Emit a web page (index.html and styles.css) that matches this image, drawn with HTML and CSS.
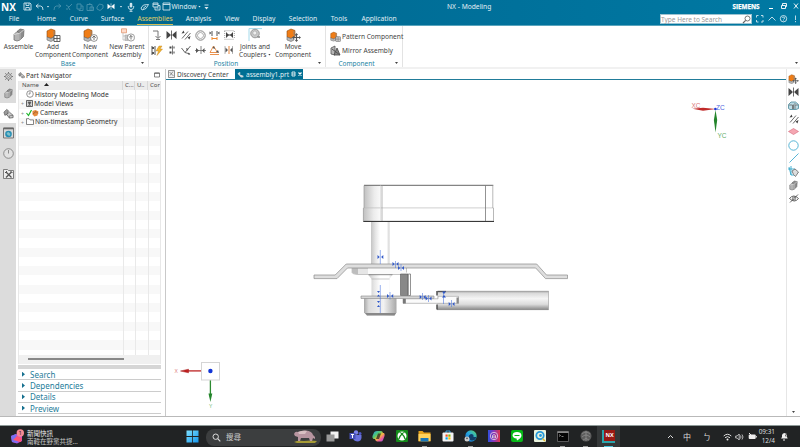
FILE: index.html
```html
<!DOCTYPE html>
<html lang="en">
<head>
<meta charset="utf-8">
<title>NX - Modeling</title>
<link rel="stylesheet" href="styles.css">
</head>
<body>
<svg class="defs" width="0" height="0">
  <defs>
    <linearGradient id="pin" x1="0" x2="1"><stop offset="0" stop-color="#c4c4c4"/><stop offset=".25" stop-color="#e6e6e6"/><stop offset=".5" stop-color="#fff"/><stop offset=".85" stop-color="#fff"/><stop offset="1" stop-color="#d0d0d0"/></linearGradient>
    <linearGradient id="knob" x1="0" x2="1"><stop offset="0" stop-color="#a8a8a8"/><stop offset=".15" stop-color="#dcdcdc"/><stop offset=".6" stop-color="#f2f2f2"/><stop offset="1" stop-color="#a8a8a8"/></linearGradient>
    <linearGradient id="box" x1="0" x2="1"><stop offset="0" stop-color="#c0c0c0"/><stop offset=".08" stop-color="#ececec"/><stop offset=".15" stop-color="#fff"/><stop offset="1" stop-color="#fff"/></linearGradient>
    <linearGradient id="rod" x1="0" x2="0" y1="0" y2="1"><stop offset="0" stop-color="#a4a4a4"/><stop offset=".12" stop-color="#dadada"/><stop offset=".4" stop-color="#f5f5f5"/><stop offset=".7" stop-color="#dcdcdc"/><stop offset="1" stop-color="#858585"/></linearGradient>
    <linearGradient id="win" x1="0" y1="0" x2="1" y2="1"><stop offset="0" stop-color="#7fe0ff"/><stop offset="1" stop-color="#1597ee"/></linearGradient>
    <linearGradient id="cop" x1="0" y1="0" x2="1" y2="1"><stop offset="0" stop-color="#2a9df4"/><stop offset=".35" stop-color="#52c96b"/><stop offset=".55" stop-color="#f5b63b"/><stop offset=".75" stop-color="#ee5aa0"/><stop offset="1" stop-color="#8d5cf0"/></linearGradient>
    <linearGradient id="ph" x1="0" x2="1"><stop offset="0" stop-color="#2f4fe0"/><stop offset=".5" stop-color="#8a35b8"/><stop offset="1" stop-color="#e0354b"/></linearGradient>
    <linearGradient id="edge" x1="0" y1="1" x2="1" y2="0"><stop offset="0" stop-color="#1261c4"/><stop offset=".5" stop-color="#25a5e0"/><stop offset="1" stop-color="#5ed865"/></linearGradient>
  </defs>
  <symbol id="i-cube" viewBox="0 0 12 14"><path d="M1 6.5 4 3.5 7 4.5 7 12 4 13 1 12Z" fill="#b4b4b4" stroke="#666" stroke-width=".7"/><path d="M4 3.5 7 1 11 1.8 10.5 8.5 7 12V5Z" fill="#8d8d8d" stroke="#666" stroke-width=".7"/><path d="M1 6.5 7 5 11 1.8M7 5v7" fill="none" stroke="#e5e5e5" stroke-width=".7"/></symbol>
  <symbol id="i-part" viewBox="0 0 15 14"><path d="M1 3 5 1 9 2.5v6L5 10.500 1 9Z" fill="#f07d16" stroke="#8a4a13" stroke-width=".6"/><path d="M1 9v3l4 1.500 3-1.500V8.500L5 10.500Z" fill="#b9b9b9" stroke="#666" stroke-width=".6"/><path d="M8 3v4l3 1" fill="none" stroke="#888" stroke-width=".8"/></symbol>
  <symbol id="i-add" viewBox="0 0 15 14"><use href="#i-part" width="15" height="14"/><path d="M8 7.500h6v6H8zM11 7.500v6M8 10.500h6" fill="#fff" stroke="#555" stroke-width=".9"/></symbol>
  <symbol id="i-new" viewBox="0 0 15 14"><use href="#i-part" width="15" height="14"/><circle cx="11" cy="10" r="3.400" fill="#fff" stroke="#666" stroke-width=".7"/><path d="M11 8v4M9.200 9.800 11 8l1.800 1.800" fill="none" stroke="#555" stroke-width=".8"/></symbol>
  <symbol id="i-parent" viewBox="0 0 15 14"><path d="M1.500.800h5v4h-5z" fill="#ffdccb" stroke="#dd8d65" stroke-width=".7"/><path d="M3 5v7h2M3 8h2" fill="none" stroke="#aaa" stroke-width=".6"/><path d="M5 7h3v5.500H5z" fill="#c9c9c9" stroke="#999" stroke-width=".5"/><circle cx="11" cy="9.500" r="3.600" fill="#fff" stroke="#777" stroke-width=".7"/><path d="M11 7.500v4M9.200 9.300 11 7.500l1.800 1.800" fill="none" stroke="#555" stroke-width=".8"/></symbol>
  <symbol id="i-move" viewBox="0 0 15 14"><use href="#i-part" width="15" height="14"/><path d="M10.500 6v7M7 9.500h7" stroke="#555" stroke-width="1.200"/><path d="m10.500 5 1.600 2H8.900zM10.500 14l1.600-2H8.900zM6 9.500l2-1.600v3.200zM15 9.500l-2-1.600v3.200z" fill="#555"/></symbol>
  <symbol id="i-joint" viewBox="0 0 15 14"><path d="M1 13V.600h13" fill="none" stroke="#8ed1e6" stroke-width=".8"/><circle cx="7" cy="5.500" r="4.300" fill="#c8c8c8" stroke="#8a8a8a" stroke-width=".8"/><circle cx="6.800" cy="5" r="2" fill="#eee" stroke="#999" stroke-width=".5"/><path d="M9.500 9h2.500" stroke="#666" stroke-width="1.200"/></symbol>
  <symbol id="i-bow" viewBox="0 0 11 10"><path d="M.500 1 4 4v2L.500 9zM10.500 1 7 4v2l3.500 3z" fill="currentColor"/><path d="M5.500.500v9M3 5h5" stroke="currentColor" stroke-width=".8"/></symbol>
  <symbol id="i-asm" viewBox="0 0 12 12"><path d="M1 4.500 4 1.500 6 3 4.500 7 2 8z" fill="#9a9a9a" stroke="#555" stroke-width=".7"/><path d="m4 7 3-2.500L11 8v2.500L7 11z" fill="#ccc" stroke="#555" stroke-width=".8"/><path d="M7 11V8.500L11 8" fill="none" stroke="#555" stroke-width=".6"/></symbol>
  <symbol id="i-par" viewBox="0 0 10 10"><path d="M1 8.500 7 1.500M4 9.500 9.500 3" stroke="currentColor" stroke-width=".8"/><path d="m.5 3.500 2-3 1 2.500zM9.500 6l-1 3.500L6.500 7.500z" fill="currentColor"/></symbol>
  <symbol id="i-news" viewBox="0 0 14 15"><path d="M1 7 6 5l6 2v5l-5 2.500L2 13z" fill="#c64bd8"/><path d="M1 7 6 5l2 9-6-1z" fill="#7770f2"/><path d="m3 11 4-4 5 2-1 4z" fill="#ff5575"/><circle cx="10.300" cy="4" r="3.700" fill="#f58a93"/></symbol>
</svg>

<header class="app-header">
  <div class="title-bar">
    <b class="nx-logo">NX</b>
    <svg width="9" height="9" viewBox="0 0 9 9"><path d="M1 1h6l1 1v6H1zM3 1v2.500h3V1M2.800 8V5.500h3.500V8" class="ln"/></svg>
    <svg width="9" height="8" viewBox="0 0 9 8"><path d="M3.500 1 1 3l2.500 2M1 3h4.500q2.500 0 2.500 4" class="ln"/></svg>
    <i class="caret"></i>
    <svg class="dim" width="9" height="8" viewBox="0 0 9 8"><path d="M5.500 1 8 3 5.500 5M8 3H3.500Q1 3 1 7" class="ln"/></svg>
    <svg class="dim" width="8" height="8" viewBox="0 0 8 8"><path d="M7 1 3 5M4 4 1 2M3.500 4.500 5 7M2 5v2" class="ln"/></svg>
    <svg class="dim" width="8" height="8" viewBox="0 0 8 8"><path d="M1 1h4v5H1zM3 6v1.500h4V3H5" class="ln"/></svg>
    <svg class="dim" width="8" height="8" viewBox="0 0 8 8"><path d="M1 1.500h5v6H1zM3 .8h1.500M4 4h3.500v3.500H4z" class="ln"/></svg>
    <svg class="dim" width="8" height="8" viewBox="0 0 8 8"><path d="M1 4 3.500 1 7 2v3L4 7.500 1 6z" class="ln"/></svg>
    <svg class="white" width="8" height="7"><use href="#i-bow"/></svg>
    <i class="caret"></i>
    <svg width="8" height="10" viewBox="0 0 8 10"><rect x="2.700" y=".8" width="2.600" height="4.700" rx="1.300" fill="#cfe5ee"/><path d="M1.300 4v1.200q0 2.300 2.700 2.300t2.700-2.300V4M4 7.500v2M2.500 9.300h3" class="ln"/></svg>
    <svg width="9" height="8" viewBox="0 0 9 8"><path d="m1 5 2.500-3 5-.5L6 5.500 2 7zM3 5.500 6 3" class="ln"/></svg>
    <svg width="9" height="9" viewBox="0 0 9 9"><path d="M1 1h5v4H1zM1 2.300h5M3 5v3h5V3.500H6M4.500 6h2" class="ln"/></svg>
    <svg width="9" height="9" viewBox="0 0 9 9"><path d="M1 1h7v7H1zM1 2.500h7" class="ln"/></svg>
    <span class="window-label">Window</span>
    <i class="caret"></i>
    <svg width="5" height="6" viewBox="0 0 5 6"><path d="M.500 1h4" class="ln"/><path d="M.500 3h4l-2 2.500z" fill="#dcebf1"/></svg>
    <span class="app-title">NX - Modeling</span>
    <b class="siemens">SIEMENS</b>
    <svg class="win-buttons" width="31" height="9" viewBox="0 0 31 9"><path d="M1 6.500h4" stroke="#fff"/><path d="M13.500 3.500h4v3h-4zM14.500 3.500v-2h4v3h-1M26 1.500l4 5M30 1.500l-4 5" fill="none" stroke="#fff" stroke-width=".9"/></svg>
  </div>
  <div class="tab-bar">
    <nav class="tabs"><a>File</a><a>Home</a><a>Curve</a><a>Surface</a><a class="active"><span>Assemblies</span></a><a>Analysis</a><a>View</a><a>Display</a><a>Selection</a><a>Tools</a><a>Application</a></nav>
    <div class="command-search"><span>Type Here to Search</span><svg width="9" height="9" viewBox="0 0 9 9"><circle cx="5.500" cy="3.500" r="2.500" fill="none" stroke="#666" stroke-width=".9"/><path d="M3.700 5.300 1 8" stroke="#666" stroke-width="1.200"/></svg></div>
    <svg class="tab-tools" width="44" height="10" viewBox="0 0 44 10"><path d="M1.500 3.500v-2h2M6 1.500h2v2M8 6v2H6M3.500 8h-2V6M13.500 6.500 17 3l3.500 3.500" class="ln"/><circle cx="28.500" cy="4.700" r="3.200" class="ln"/><path d="M27.500 4q0-1 1-1t1 1-1 1.500M28.500 6.500v.7M40.500 1.500v4.500M40.500 7v1.200" class="ln"/></svg>
  </div>
</header>

<section class="ribbon">
  <div class="group base">
    <div class="tools">
      <div class="tool w37"><svg width="12" height="14"><use href="#i-cube"/></svg><span>Assemble</span></div>
      <div class="tool w33"><svg width="15" height="14"><use href="#i-add"/></svg><span>Add<br>Component</span></div>
      <div class="tool w40"><svg width="15" height="14"><use href="#i-new"/></svg><span>New<br>Component</span></div>
      <div class="tool w34"><svg width="15" height="14"><use href="#i-parent"/></svg><span>New Parent<br>Assembly</span></div>
    </div>
    <footer><span>Base</span><i class="caret dark"></i></footer>
  </div>
  <div class="group position">
    <div class="tools">
      <div class="icon-grid">
        <svg width="10" height="10" viewBox="0 0 10 10"><path d="M1 1h5v7M3.500 6 6 8.500 8.500 6M4 9.500h4" fill="none" stroke="#666" stroke-width=".9"/></svg>
        <svg width="11" height="10"><use href="#i-bow"/></svg>
        <svg width="10" height="10"><use href="#i-par"/></svg>
        <svg width="11" height="11" viewBox="0 0 11 11"><circle cx="5.500" cy="5.500" r="4.700" fill="none" stroke="#777" stroke-width=".9"/><circle cx="5.500" cy="5.500" r="3" fill="none" stroke="#999" stroke-width=".8"/></svg>
        <svg width="11" height="11" viewBox="0 0 11 11"><path d="M3 1v5M8 1v5" stroke="#555"/><path d="m.5 1.500 2 1.500-2 1.500zM10.500 1.500l-2 1.500 2 1.500z" fill="#555"/><path d="M3 8.500h5M3 7v3M8 7v3" stroke="#ef8a32"/></svg>
        <svg width="11" height="10" viewBox="0 0 11 10"><path d="M.500.700h10M.500 9.300h10M.700 1v8M10.300 1v8" stroke="#777" stroke-width=".7" stroke-dasharray="1 1"/><path d="m2 2 3 3-3 3zM9 2 6 5l3 3z" fill="#444"/><path d="M2 5h7" stroke="#444"/></svg>
        <svg width="12" height="11" viewBox="0 0 12 11"><path d="M1 1v9M4 1v9" stroke="#555"/><path d="M1 2h2v2H1zM1 7h2v2H1z" fill="#555"/><path d="M8 1 5 6h2.500L6 10.500 11.500 4H9L11 1z" fill="#f5b52d" stroke="#b87818" stroke-width=".4"/></svg>
        <svg width="6" height="10" viewBox="0 0 6 10"><path d="M3.500.500v9" stroke="#555" stroke-width=".8"/><path d="M.500 1.500h2v2h-2zM.500 6.500h2v2h-2zM4.500 1.500h1v2h-1zM4.500 6.500h1v2h-1z" fill="#444"/></svg>
        <svg width="10" height="10" viewBox="0 0 10 10"><path d="M.500 3 4 7.500 9.500 1M4 7.500 9 9" fill="none" stroke="#555" stroke-width=".9"/><path d="m5 3 2.500 1L6 6zM9.500 9.500 7 7.500v2z" fill="#555"/></svg>
        <svg width="11" height="10" viewBox="0 0 11 10"><path d="M0 5.500h11M6 1v8" stroke="#666" stroke-width=".8"/><path d="m1 3 3 2.500L1 8zM9.500 3 7 5.500 9.500 8z" fill="#555"/></svg>
        <svg width="11" height="11" viewBox="0 0 11 11"><path d="M1 7.500 4.500 1l4 6.500zM1 9.500h9" fill="none" stroke="#e8863a" stroke-width=".9"/><path d="m5 1 1 3-2.500-1zM9 5l1 3-3-1z" fill="#555"/></svg>
        <svg width="10" height="10" viewBox="0 0 10 10"><path d="M5 1v8" stroke="#e8863a"/><path d="M1 1v8M8.500 1v8" stroke="#888" stroke-width=".6"/><path d="m1.500 2.500 2.500 2.500-2.500 2.500zM8.500 2.500 6 5l2.500 2.500z" fill="#555"/></svg>
      </div>
      <div class="tool w38"><svg width="15" height="14"><use href="#i-joint"/></svg><span>Joints and<br>Couplers <i class="caret dark"></i></span></div>
      <div class="tool w38"><svg width="15" height="14"><use href="#i-move"/></svg><span>Move<br>Component</span></div>
    </div>
    <footer><span>Position</span><i class="caret dark"></i></footer>
  </div>
  <div class="group component">
    <div class="wide-tools">
      <div><svg width="11" height="11"><use href="#i-add"/></svg><span>Pattern Component</span></div>
      <div><svg width="11" height="11" viewBox="0 0 11 11"><path d="M1 9V3l4-2v9z" fill="#b8b8b8" stroke="#555" stroke-width=".8"/><path d="m4 10 3-7 3 7z" fill="#888" stroke="#444" stroke-width=".8"/><path d="m2 4 8 6" stroke="#555"/></svg><span>Mirror Assembly</span></div>
    </div>
    <footer><span>Component</span><i class="caret dark"></i></footer>
  </div>
  <i class="caret dark ribbon-more"></i>
</section>

<main class="workspace">
  <aside class="resource-bar">
    <span><svg width="9" height="9" viewBox="0 0 9 9"><circle cx="4.500" cy="4.500" r="2.800" fill="none" stroke="#777" stroke-width="1"/><circle cx="4.500" cy="4.500" r="1" fill="none" stroke="#777" stroke-width=".7"/><path d="M4.500 0v9M0 4.500h9M1.300 1.300l6.400 6.400M7.700 1.300 1.300 7.700" stroke="#777" stroke-width="1" stroke-dasharray="1.200 6.600 1.200"/></svg></span>
    <span><svg width="9" height="11"><use href="#i-cube"/></svg></span>
    <span class="active"><svg width="11" height="11"><use href="#i-asm"/></svg></span>
    <span><svg width="11" height="12" viewBox="0 0 11 12"><path d="M.500 1h10v10H.500z" fill="#d8d8d8" stroke="#777"/><path d="M.500 1.500h10" stroke="#666" stroke-width="1.600"/><circle cx="5.500" cy="7" r="3.300" fill="#258fb4"/><path d="m3.500 6 2-1 2 2-1 2-2-1z" fill="#80c0cb"/></svg></span>
    <span><svg width="11" height="11" viewBox="0 0 11 11"><circle cx="5.500" cy="5.500" r="4.800" fill="#e2e2e2" stroke="#777" stroke-width=".8"/><path d="M5.500 2v3.500" stroke="#777" stroke-width=".8"/></svg></span>
    <span><svg width="11" height="11" viewBox="0 0 11 11"><path d="M.500 10.500v-9h4l1 1h5v8z" fill="#eee" stroke="#666" stroke-width=".8"/><path d="m3 4 5.500 5.500M8.500 4 3 9.500" stroke="#555" stroke-width="1.300"/><path d="M2 5l2-2M7.500 3l2 2" stroke="#555"/></svg></span>
  </aside>

  <section class="navigator">
    <div class="nav-title"><svg width="7" height="8"><use href="#i-asm"/></svg><span>Part Navigator</span><svg class="dock" width="6" height="6" viewBox="0 0 6 6"><path d="M.500 1h5v4h-5z" fill="none" stroke="#666" stroke-width=".8"/><path d="M.500 1.200h5" stroke="#666"/></svg></div>
    <div class="tree">
      <div class="tree-head"><span>Name <svg width="5" height="3" viewBox="0 0 5 3"><path d="M0 3h5L2.500 0z" fill="#222"/></svg></span><span>C...</span><span>U..</span><span>Cor</span></div>
      <div class="tree-body">
        <div class="row leaf"><svg width="8" height="8" viewBox="0 0 8 8"><circle cx="4" cy="4" r="3.300" fill="#fff" stroke="#666" stroke-width=".7"/><path d="M4 1.500V4H2.500" fill="none" stroke="#666" stroke-width=".7"/></svg><span>History Modeling Mode</span></div>
        <div class="row"><i>+</i><svg width="7" height="7" viewBox="0 0 7 7"><path d="M.500.500h6v6h-6z" fill="#d6d6d6" stroke="#555" stroke-width=".9"/><path d="M2 2h3L3.500 5zM2 5.500h3" fill="#555" stroke="#555" stroke-width=".6"/></svg><span>Model Views</span></div>
        <div class="row"><i>+</i><svg width="13" height="8" viewBox="0 0 13 8"><path d="m.5 4 2 2.500L5.500 1" fill="none" stroke="#19b526" stroke-width="1.200"/><path d="m6.500 2 3-1 3 1.500-1 4-3 1-2-2z" fill="#e58a3c"/><path d="m7 5 3-2.500 2 2" fill="none" stroke="#8a5230" stroke-width=".7"/></svg><span>Cameras</span></div>
        <div class="row"><i>+</i><svg width="8" height="7" viewBox="0 0 8 7"><path d="M.500 6.500V.700h2.500l1 1.200h3.500v4.600z" fill="#fff" stroke="#666" stroke-width=".8"/></svg><span>Non-timestamp Geometry</span></div>
      </div>
      <div class="h-scroll"><i></i></div>
    </div>
    <div class="sash"></div>
    <div class="sections"><div>Search</div><div>Dependencies</div><div>Details</div><div>Preview</div></div>
  </section>

  <section class="viewer">
    <div class="doc-tabs">
      <div class="doc-tab"><svg width="7" height="8" viewBox="0 0 7 8"><path d="M.500.500h6v7h-6z" fill="#eee" stroke="#777" stroke-width=".8"/><path d="m1.500 2 4 4M5 1.500l-3 4" stroke="#777" stroke-width=".8"/></svg><span>Discovery Center</span></div>
      <div class="doc-tab current"><svg width="7" height="7" viewBox="0 0 12 12"><path d="M1 4.500 4 1.500 6 3 5 6l6 2v2.500L7 11z" fill="#cfd8dc"/></svg><span>assembly1.prt</span><svg width="5" height="6" viewBox="0 0 5 6"><path d="M1 1h3v4H1zM1 3h3" fill="none" stroke="#fff" stroke-width=".8"/></svg><svg width="4" height="4" viewBox="0 0 4 4"><path d="m.5.500 3 3M3.500.500l-3 3" stroke="#fff" stroke-width="1.200"/></svg></div>
    </div>
    <div class="view-row">
      <svg class="canvas" viewBox="166 80 620 336" width="620" height="336">
        <g class="csys-text">
          <path d="M692.500 108.800 703 107.800l13 1.200-13 1.700z" fill="#c02a2a"/><path d="m715.500 110 1.700 10-1.700 12.500-1.600-12.500z" fill="#23852b"/><circle cx="715.400" cy="109" r="1.300" fill="#1837d8"/>
          <text x="691.500" y="108" fill="#d97a7a">XC</text><text x="716" y="109.700" fill="#4d65e0">ZC</text><text x="717.500" y="138" fill="#64b06a">YC</text>
        </g>
        <g>
          <rect x="371" y="220" width="18.500" height="45" fill="url(#pin)"/>
          <path d="M364 185.500h129v22.500H364z" fill="url(#box)"/><path d="M363.300 208h130.200v13.500H363.300z" fill="url(#box)"/>
          <path d="M364 185.300h129.300" stroke="#555" stroke-width=".9"/><path d="M363.300 221.400h130.700" stroke="#222"/><path d="M363.500 207.900h130" stroke="#bbb" stroke-width=".7"/>
          <path d="M382 185.500V221" stroke="#999" stroke-width=".7"/><path d="M380.500 185.500V221" stroke="#ddd" stroke-width=".7"/><path d="M485.500 185.500V221" stroke="#777" stroke-width=".8"/><path d="M492.800 185.500V208m.7 0v13M364 185.500V208m-.6 0v13" stroke="#999" stroke-width=".7"/>
          <path d="M352 268h54.500v4l-2 2.500H357q-5-.5-5-2z" fill="#e6e6e6" stroke="#999" stroke-width=".5"/><path d="M368 268h38v6h-38z" fill="#fafafa"/><path d="M352 268h6v6q-6 0-6-2z" fill="#bdbdbd"/>
          <path d="M314 275h21.200l11-11h190.500l9.800 11H567.500v3.600h-22l-9.800-10.600H347.500L337 278.600H314z" fill="#dedede" stroke="#8a8a8a" stroke-width=".7"/>
          <path d="M400.500 274h7.500v21.500h-7.500z" fill="#888" stroke="#555" stroke-width=".6"/><path d="M408.300 274h2.200v21.500h-2.200z" fill="#fff" stroke="#666" stroke-width=".7"/>
          <path d="M368 274.500h24.500l-3 4.500v17h-18v-17z" fill="url(#pin)"/><path d="M368.500 274.700h24" stroke="#777" stroke-width=".8"/><path d="M371.500 279h18" stroke="#aaa" stroke-width=".6"/>
          <path d="M364 298h32.500v14.500l-2 3H367l-3-3z" fill="url(#knob)"/><path d="M365 313h31l-1.500 2.500H367z" fill="#888"/>
          <path d="M361 296h73v2.500h-73z" fill="#d5d5d5" stroke="#888" stroke-width=".6"/>
          <rect x="437" y="291" width="111.700" height="19" fill="url(#rod)"/><path d="M437 291.200h111.700M437 309.700h111.700" stroke="#999" stroke-width=".5"/><path d="M548.500 291v19" stroke="#aaa" stroke-width=".7"/><path d="M437 291v4.500M437 304.500v5" stroke="#444" stroke-width="1.400"/><path d="M438 291.500h8" stroke="#555" stroke-width="1.200"/>
          <path d="M403 298.800h35v-2.500h20.500v7H403z" fill="#fbfbfb" stroke="#999" stroke-width=".6"/><path d="M403 298.800h2.800v4.700H403z" fill="#777"/><path d="M456.500 297.500h2.200v6h-2.200z" fill="#888"/>
        </g>
        <g stroke="#527be0" stroke-width=".6" fill="#3159c8">
          <path d="M380.300 250v14M380.300 285v28M395.500 261v7M401 264v7M390 292v7.500M422.500 293v7M428.500 295v7M443.500 292v12M451.500 300v7" fill="none"/>
          <g stroke="none" id="constraint-marks">
            <path d="m377.500 255 2.200 2-2.200 2zM383.300 255l-2.200 2 2.200 2zM392.500 262l2.200 2-2.200 2zM398.500 262l-2.200 2 2.200 2zM398 266l2.200 2-2.200 2zM404 266l-2.200 2 2.200 2zM387 294l2.200 2-2.200 2zM393.200 294l-2.200 2 2.200 2zM419.700 295l2.200 2-2.200 2zM425.500 295l-2.200 2 2.200 2zM425.700 296.500l2.200 2-2.200 2zM431.500 296.500l-2.200 2 2.200 2zM448.700 302l2.200 2-2.200 2zM454.500 302l-2.200 2 2.200 2z"/>
            <path d="m377 291 3 0-1.500 2zM377 296.500h3l-1.500-2zM377 301h3l-1.500 2zM377 307h3l-1.500-2zM442 291.500h4l-2 2.500zM442 297.500h4l-2-2.500z"/>
          </g>
        </g>
        <g>
          <path d="M201.500 370.900H186" stroke="#bd2424" stroke-width="1.300"/><path d="m180.500 371 8-1.800v3.600z" fill="#c02020" stroke="#a51d1d" stroke-width=".5"/>
          <path d="M210.400 380v17" stroke="#2d8a32" stroke-width="1.300"/><path d="m210.400 402-1.900-8.500h3.800z" fill="#23852b"/>
          <rect x="201.500" y="362.500" width="18" height="17.500" fill="#fff" stroke="#d5d5d5"/><circle cx="210.400" cy="371" r="2.200" fill="#1236d6"/>
          <g class="triad-text"><text x="174.500" y="373" fill="#dc7c7c">X</text><text x="209" y="407.500" fill="#68b56d">Y</text></g>
        </g>
      </svg>
    </div>
  </section>

  <aside class="border-bar">
    <svg width="11" height="10"><use href="#i-move"/></svg>
    <svg width="11" height="10"><use href="#i-bow"/></svg>
    <svg width="11" height="9" viewBox="0 0 11 9"><path d="M.500 3.500 3 1h4.500l3 2.500v4L8 8.500H2L.500 7.500z" fill="#bcdce6" stroke="#4a8798" stroke-width=".8"/><path d="M1 4h3.500v4M5.500 8V4l2-2M7 8V4h3" fill="none" stroke="#666" stroke-width=".8"/></svg>
    <svg width="10" height="10"><use href="#i-par"/></svg>
    <svg width="11" height="7" viewBox="0 0 11 7"><path d="m.5 3.500 5-3 5 3-5 3z" fill="#f5a7b2" stroke="#d5677b" stroke-width=".6"/></svg>
    <svg width="11" height="11" viewBox="0 0 11 11"><circle cx="5.500" cy="5.500" r="4.700" fill="none" stroke="#45add0" stroke-width=".9"/></svg>
    <svg width="10" height="10" viewBox="0 0 10 10"><path d="m.5 9.500 9-9" stroke="#45add0" stroke-width=".9"/></svg>
    <svg width="11" height="11" viewBox="0 0 11 11"><path d="M3 0v9M0 3h7M1 1l2 8h3" fill="none" stroke="#36a8cc" stroke-width=".9"/><path d="m4 5 3-2 3.500 3-3 4.500-2-2z" fill="#ddd" stroke="#666" stroke-width=".8"/></svg>
    <svg width="9" height="11"><use href="#i-cube"/></svg>
    <svg width="10" height="9" viewBox="0 0 10 9"><path d="M.500 4.500q4-5 9 0-4 5-9 0zM1 8.500 9 .500" fill="none" stroke="#555" stroke-width=".9"/><circle cx="5" cy="4.500" r="1.600" fill="none" stroke="#555" stroke-width=".8"/></svg>
    <i class="caret dark side-more"></i>
  </aside>
</main>
<div class="status-line"></div>

<footer class="taskbar">
  <div class="widget"><span class="news-icon"><svg width="14" height="15"><use href="#i-news"/></svg><b>1</b></span><div>新聞快訊<br><em>南韓在野黨共提...</em></div></div>
  <svg class="start" width="13" height="13" viewBox="0 0 13 13"><path d="M.500.500h5.600v5.600H.500zM6.900.500h5.600v5.600H6.900zM.500 6.900h5.600v5.600H.500zM6.900 6.900h5.600v5.600H6.900z" fill="url(#win)"/></svg>
  <div class="search"><svg width="9" height="9" viewBox="0 0 9 9"><circle cx="3.700" cy="3.700" r="2.700" fill="none" stroke="#ddd" stroke-width="1"/><path d="m5.700 5.700 2.600 2.600" stroke="#ddd" stroke-width="1.200"/></svg><span>搜尋</span><svg class="tapir" width="25" height="14" viewBox="0 0 25 14"><path d="M1 12q4-2 10-1 7-1 13 0l-2 2H4z" fill="#a59a35"/><path d="M1 4Q2 1 5 2q4-2 8-1.500 6 .5 7 4.500l2 2v2l-2-1-1 3h-2l-1-3H8l-1 3H5L5 7 2 6z" fill="#b795a0"/><path d="M5 2q5-2 9-1l-2 3H6z" fill="#d8bfc2"/></svg></div>
  <div class="apps">
    <span><svg width="13" height="11" viewBox="0 0 13 11"><path d="M4.500.500h8v7h-8z" fill="#f2f2f2"/><path d="M.500 3.500h8v7h-8z" fill="#999"/></svg></span>
    <span><svg width="13" height="12" viewBox="0 0 13 12"><circle cx="7" cy="2.500" r="2.200" fill="#7b83eb"/><circle cx="11" cy="3.500" r="1.500" fill="#5059c9"/><path d="M4 5h8.500v3q-.5 3-3.500 3.500-4 0-5-3z" fill="#6871dc"/><path d="M.500 3h6v6h-6z" fill="#4650b8"/><path d="M2 4.500h3M3.500 4.500V8" stroke="#fff"/></svg></span>
    <span><svg width="13" height="12" viewBox="0 0 13 12"><path d="M5 1h4q1.500 0 2 2h1q1 1 .5 3L11 10q-.5 1.500-2 1.500H5Q3.500 11 3 9H1.500Q0 8 .5 6L2 2.500Q2.500 1 5 1z" fill="url(#cop)"/><path d="m6 3.500-2 5.500h3l2-5.500z" fill="#252525" opacity=".75"/></svg></span>
    <span><svg width="12" height="12" viewBox="0 0 12 12"><rect width="12" height="12" rx="1" fill="#138b19"/><circle cx="6" cy="6" r="4.500" fill="#fff"/><path d="M2.800 9.200Q4 5.500 6 4q2 1.500 3.200 5.200M3.500 2.500Q5 2.500 6 4q1-1.500 2.500-1.500" fill="none" stroke="#138b19" stroke-width="1.200"/></svg></span>
    <span class="open"><svg width="13" height="12" viewBox="0 0 13 12"><path d="M.500 1h4l1.500 1.500h6.500v9H.500z" fill="#e6a21c"/><path d="M.500 4h12v7H.500z" fill="#ffd25c"/><path d="M2.500 8h8v3.500h-8z" fill="#1976b8"/></svg></span>
    <span><svg width="12" height="12" viewBox="0 0 12 12"><path d="M4 3V1h4v2" fill="none" stroke="#39a7e5"/><rect x=".5" y="2.500" width="11" height="9" rx="1" fill="#f3f3f3"/><path d="M3.500 4.500h2.200v2.200H3.500z" fill="#f05022"/><path d="M6.300 4.500h2.200v2.200H6.300z" fill="#7fba00"/><path d="M3.500 7.300h2.200v2.200H3.500z" fill="#00a4ef"/><path d="M6.300 7.300h2.200v2.200H6.300z" fill="#ffb900"/></svg></span>
    <span class="open"><svg width="13" height="12" viewBox="0 0 13 12"><circle cx="7" cy="6" r="5.700" fill="url(#edge)"/><path d="M5 8Q4 5 7 4q3 0 2.500 3h3Q11 11 7.500 10.500 5.500 10 5 8z" fill="#133e68"/><circle cx="3" cy="9" r="2.500" fill="#ccc"/><circle cx="3" cy="8.300" r=".9" fill="#555"/></svg></span>
    <span><svg width="12" height="12" viewBox="0 0 12 12"><path d="M0 0h12v12H0z" fill="url(#ph)"/><circle cx="6" cy="6" r="3.700" fill="none" stroke="#d9b7df" stroke-width="1"/><path d="M4.500 8V5.500q1.500-2 3 0V8M6 6v2.500" fill="none" stroke="#eed" stroke-width=".8"/></svg></span>
    <span><svg width="12" height="12" viewBox="0 0 12 12"><rect width="12" height="12" rx="2" fill="#06b917"/><path d="M10.500 5.200Q10 2 6 2T1.500 5.200Q1.700 8 5.500 8.500L6 10.500q4.500-2.500 4.500-5.300z" fill="#fff"/><path d="M3.500 5.500h5" stroke="#06b917" stroke-width="1"/></svg></span>
    <span><svg width="12" height="12" viewBox="0 0 12 12"><rect width="12" height="12" rx="1" fill="#eaf3dd"/><circle cx="6" cy="5.500" r="3.700" fill="none" stroke="#269adb" stroke-width="1.800"/><circle cx="6.500" cy="5.500" r="1.400" fill="#269adb"/><path d="m8.500 8.500 2.500 2.500" stroke="#e3b834" stroke-width="1.500"/></svg></span>
    <span class="open"><svg width="12" height="11" viewBox="0 0 12 11"><path d="M.500.500h11v10H.500z" fill="#050505" stroke="#777" stroke-width=".7"/><path d="M.500 1.200h11" stroke="#aaa" stroke-width="1.200"/><path d="m2 3.500 1.500 1L2 5.500M4.500 5.500h2" stroke="#ccc" fill="none" stroke-width=".6"/></svg></span>
    <span class="open"><svg width="12" height="12" viewBox="0 0 12 12"><circle cx="6" cy="6" r="5.500" fill="#5d5d5d"/><path d="M2 4q4-4 8 0M2 7q4-4 8 0M3 10q3-3 6 0M6 1v10" fill="none" stroke="#9a9a9a" stroke-width=".6"/></svg></span>
    <span class="active"><b>NX</b></span>
  </div>
  <div class="tray">
    <svg width="7" height="5" viewBox="0 0 7 5"><path d="m1 4 2.500-2.500L6 4" fill="none" stroke="#ddd"/></svg><span>中</span><span>ㄅ</span>
    <svg width="9" height="8" viewBox="0 0 9 8"><path d="M.700 3q3.800-3.500 7.600 0M2 4.700q2.500-2.200 5 0" fill="none" stroke="#ddd" stroke-width="1"/><circle cx="4.500" cy="6.500" r="1" fill="#eee"/></svg>
    <svg width="9" height="8" viewBox="0 0 9 8"><path d="M.700 3h1.500l2-2v6l-2-2H.700zM5.500 2.500q1 1.500 0 3M7 1.500q2 2.500 0 5" fill="none" stroke="#ddd" stroke-width=".8"/></svg>
    <svg width="9" height="7" viewBox="0 0 9 7"><rect x=".7" y="1.500" width="7" height="4.500" rx="1" fill="#eee"/><path d="M8.300 3v1.500M1 0l2 2-2 1" stroke="#eee" fill="none"/></svg>
    <time>09:31<br>12/4</time>
    <svg width="8" height="9" viewBox="0 0 8 9"><path d="M1 6.500 2 5V3q.5-2 3-2l2 1v3l.7 1.500z" fill="#eee"/><path d="M3 8h2" stroke="#eee"/><path d="M5 2h2L5 4h2" stroke="#333" fill="none" stroke-width=".6"/></svg>
  </div>
</footer>
</body>
</html>
```
FILE: styles.css
```css
* { box-sizing: border-box; }
body {
  margin: 0; width: 800px; height: 447px; overflow: hidden;
  display: flex; flex-direction: column; background: #fff; color: #4d4d4d;
  font: 6.5px/7px "Noto Sans", "Open Sans", "Noto Sans CJK TC", sans-serif;
}
svg { display: block; flex: none; }
.defs { display: none; display: block; height: 0; }
.caret { display: inline-block; width: 3px; height: 2px; background: #dcebf1; clip-path: polygon(0 0, 100% 0, 50% 100%); }
.caret.dark { background: #444; }
.ln { fill: none; stroke: #cfe5ee; stroke-width: .9; }

.app-header { height: 26px; flex: none; background: linear-gradient(90deg, #006388, #00709a 60%, #0079a3); color: #e2eff4; border-bottom: 1px solid #5aa5bd; }
.title-bar {
  height: 13px; display: grid; align-items: center; justify-items: center;
  grid-template-columns: 22px 11px 12px 6px 12px 11px 11px 10px 10px 12px 8px 12px 14px 11px 9px 26px 5px 9px 516px 40px 33px;
}
.title-bar { grid-template-columns: 22px 11px 12px 6px 12px 11px 11px 10px 10px 12px 8px 12px 14px 11px 9px 26px 5px 9px 514px 42px 32px; }
.nx-logo { font: bold 10px/12px "Open Sans", sans-serif; color: #fff; justify-self: start; padding-left: 1px; }
.window-label { font-size: 6.6px; }
.dim { opacity: .35; }
.white { color: #fff; }
.app-title { justify-self: start; padding-left: 236px; font-size: 6.7px; }
.siemens { font: bold 6.3px/8px "Open Sans", sans-serif; color: #fff; -webkit-text-stroke: .25px #fff; }
.tab-bar { height: 12px; display: flex; align-items: center; }
.tabs { display: grid; grid-template-columns: 28px 37px 28px 39px 46px 41px 26px 38px 40px 32px 48px; width: 660px; text-align: center; font-size: 6.7px; line-height: 11px; }
.tabs .active { color: #e4cf68; }
.tabs .active span { display: inline-block; height: 12px; border-bottom: 1px solid #d2bd55; }
.command-search { width: 92px; height: 10px; margin: 0; background: #fff; border: 1px solid #9cc3d1; color: #9a9a9a; display: flex; align-items: center; justify-content: space-between; }
.tab-tools { margin-left: 3px; }

.ribbon { height: 41px; flex: none; display: flex; background: #fff; color: #444; }
.group { height: 41px; border-right: 1px solid #e3e3e3; display: flex; flex-direction: column; }
.base { width: 149px; } .position { width: 177px; } .component { width: 77px; }
.tools { display: flex; height: 33px; padding-top: 2px; }
.tool { display: flex; flex-direction: column; align-items: center; text-align: center; white-space: nowrap; gap: 1px; line-height: 7.5px; }
.tool .caret { vertical-align: 1px; }
.w37 { width: 37px; } .w33 { width: 32px; } .w40 { width: 42px; } .w34 { width: 32px; } .w38 { width: 38px; }
.icon-grid { display: grid; grid-template-columns: repeat(6, 14.400px); grid-template-rows: 14px 16px; place-items: center; color: #444; width: 87px; padding-left: 1px; }
.group footer { height: 8px; display: flex; align-items: center; color: #2583a3; padding-right: 4px; }
.group footer span { flex: 1; text-align: center; }
.base footer span { padding-right: 5px; }
.position footer span { padding-right: 15px; }
.component footer span { padding-right: 8px; }
.wide-tools { height: 33px; padding: 3px 0 0 4px; display: grid; grid-template-rows: 14px 15px; font-size: 6.6px; }
.wide-tools div { display: flex; align-items: center; gap: 1px; white-space: nowrap; }
.ribbon-more { margin: 36px 2px 0 auto; }

.workspace { height: 350px; flex: none; display: flex; background: #fff; border-top: 2px solid #f1f1f1; border-bottom: 1px solid #b9b9b9; }
.resource-bar { width: 16px; background: #dcdcdc; display: flex; flex-direction: column; }
.resource-bar span { height: 20px; display: grid; place-items: center; }
.resource-bar span:first-child { height: 14px; }
.resource-bar .active { background: #fff; }
.navigator { width: 150px; border-right: 1px solid #c9c9c9; padding: 0 4px 0 2px; }
.nav-title { height: 12px; padding-left: 0; display: flex; align-items: center; gap: 1px; color: #333; font-size: 6.7px; line-height: 9px; }
.nav-title .dock { margin: 0 1px 0 auto; }
.tree { height: 283px; border: 1px solid #e8e8e8; border-width: 0 1px; }
.tree-head { height: 8.500px; background: #ececec; display: grid; grid-template-columns: 104px 12px 13px 13px; line-height: 9px; font-size: 6px; overflow: hidden; }
.tree-head span { padding-left: 3px; border-right: 1px solid #d8d8d8; white-space: nowrap; overflow: hidden; }
.tree-head span:nth-child(n+2) { padding-left: 2px; }
.tree-head span:last-child { border: 0; }
.tree-head svg { display: inline-block; margin-left: 4px; vertical-align: 1px; }
.tree-body { height: 265.500px; color: #333; background: linear-gradient(90deg, transparent 103.500px, #e9e9e9 103.500px 104.500px, transparent 104.500px 115.500px, #e9e9e9 115.500px 116.500px, transparent 116.500px 128.500px, #e9e9e9 128.500px 129.500px, transparent 129.500px), repeating-linear-gradient(#fff 0 9.270px, #f8f8f8 9.270px 18.540px); }
.row { height: 9.270px; display: flex; align-items: center; gap: 1px; padding-left: 2px; line-height: 9px; white-space: nowrap; font-size: 6.7px; }
.row i { width: 4px; font: 5px/6px "Liberation Sans", sans-serif; color: #888; }
.leaf { padding-left: 7px; }
.h-scroll { height: 9px; background: #f0f0f0; padding: 3px 0 0 9px; }
.h-scroll i { display: block; width: 96px; height: 2px; background: #888; }
.sash { height: 4px; margin-top: 1px; background: #d6d6d6; }
.sections { color: #247c99; font-size: 8px; }
.sections div { height: 11.300px; display: flex; align-items: center; line-height: 11px; border-bottom: 1px solid #ccc; padding-left: 4px; }
.sections div::before { content: ""; width: 3px; height: 5px; margin-right: 5px; background: #16708f; clip-path: polygon(0 0, 100% 50%, 0 100%); }
.viewer { width: 620px; }
.doc-tabs { height: 11px; display: flex; border-bottom: 1px solid #217c9a; background: #fff; }
.doc-tab { display: flex; align-items: center; gap: 2px; padding-left: 2px; width: 68px; white-space: nowrap; line-height: 9px; color: #444; }
.current { width: 68px; margin-left: 1px; padding-left: 2px; background: #006e92; color: #e5f1f5; }
.canvas { background: #fff; }
.csys-text { font: 6.5px "Liberation Sans", sans-serif; }
.triad-text { font: 5px "Liberation Sans", sans-serif; }
.border-bar { width: 14px; border-left: 1px solid #e6e6e6; display: grid; grid-template-rows: repeat(10, 13.300px) 1fr; justify-items: center; align-items: center; padding-top: 3px; color: #444; }
.side-more { align-self: end; margin-bottom: 3px; }
.status-line { height: 8px; flex: none; background: #fff; }

.taskbar { height: 22px; flex: none; background: #212324; border-top: 1px solid #8e9a98; color: #ddd; display: flex; align-items: center; }
.widget { width: 186px; display: flex; align-items: center; gap: 3px; padding-left: 10px; font: 6.5px/8px "Noto Sans CJK TC", sans-serif; color: #f0f0f0; }
.news-icon { display: grid; }
.news-icon svg, .news-icon b { grid-area: 1 / 1; }
.news-icon b { font: 6px/8px "Open Sans", sans-serif; color: #3a1015; padding-left: 8.500px; }
.widget em { font-style: normal; color: #c5c5c5; }
.start { margin-right: 7px; }
.search { width: 115px; height: 17px; margin-top: 1px; border-radius: 8px; background: #3c3e3f; display: flex; align-items: center; padding: 0 3px 0 6px; gap: 5px; font: 7.5px/12px "Noto Sans CJK TC", sans-serif; color: #ccc; }
.tapir { margin-left: auto; }
.apps { display: flex; height: 21px; }
.apps span { width: 23px; height: 21px; display: grid; place-items: center; border-bottom: 1px solid transparent; }
.apps .open { border-image: linear-gradient(90deg, transparent 42%, #999 42% 58%, transparent 58%) 1; }
.apps .active { background: #343738; border-image: linear-gradient(90deg, transparent 33%, #4cc2d8 33% 67%, transparent 67%) 1; }
.apps .active b { width: 13px; height: 13px; background: #991914; border-left: 2px solid #2ba5ab; border-bottom: 2px solid #2ba5ab; color: #fff; font: bold 5.500px/11px "Open Sans", sans-serif; text-align: center; }
.tray { margin-left: auto; display: grid; grid-template-columns: 14px 20px 20px 20px 12px 13px 17px 15px; width: 137px; place-items: center; font: 8px/10px "Noto Sans CJK TC", sans-serif; }
.tray { grid-template-columns: 14px 20px 20px 20px 5px 21px 12px 17px; }
.tray time { font: 6.4px/8.500px "Noto Sans", sans-serif; text-align: right; justify-self: end; }
```
